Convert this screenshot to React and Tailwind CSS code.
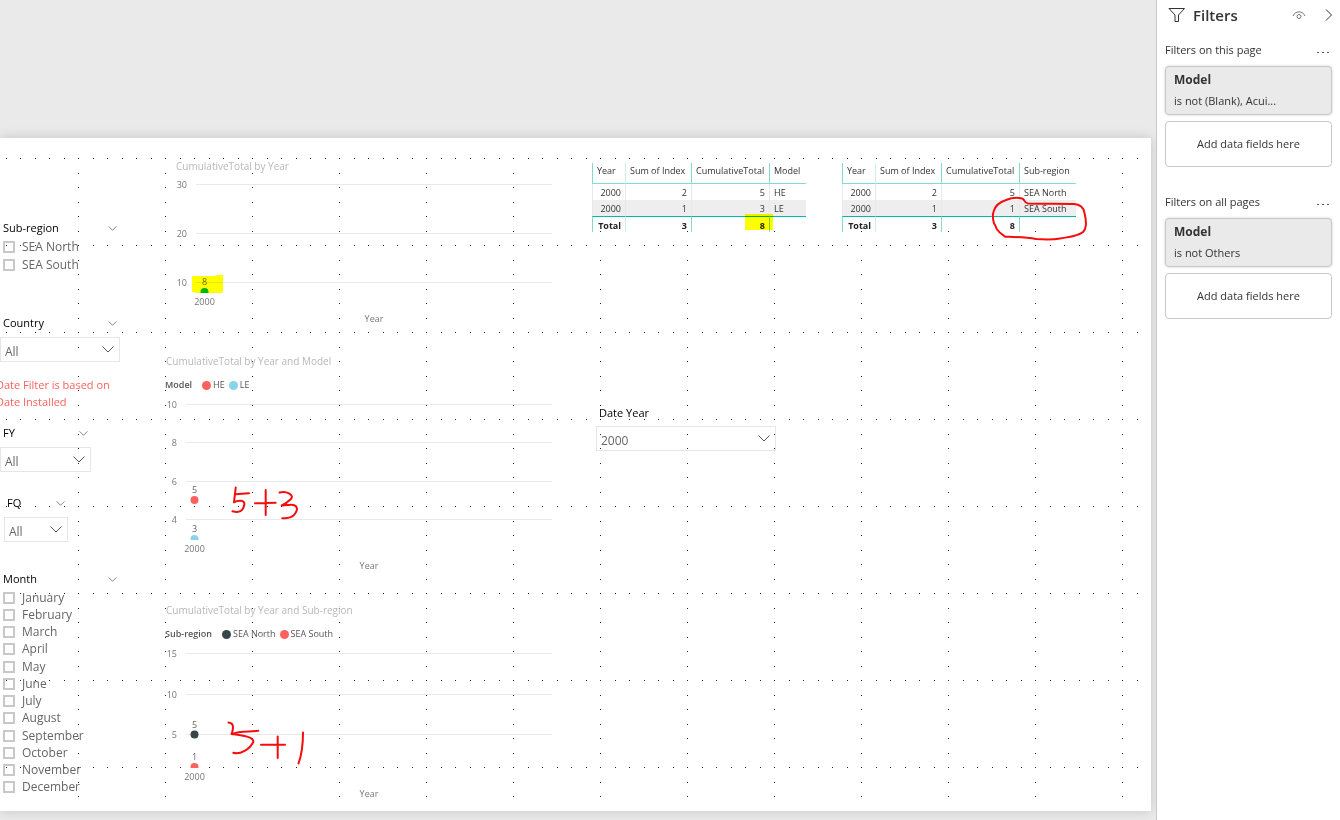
import { useState } from 'react'
import clsx from 'clsx'

const MONTHS = [
  'January', 'February', 'March', 'April', 'May', 'June',
  'July', 'August', 'September', 'October', 'November', 'December',
]

const REGIONS = ['SEA North', 'SEA South']

// dot offsets inside one 87px grid cell
const DOT_STEPS = [0, 15, 29, 44, 58, 73]

function Chevron({ className, size = 9 }) {
  return (
    <svg
      width={size}
      height={size === 9 ? 5 : 7}
      viewBox="0 0 12 7"
      fill="none"
      stroke="currentColor"
      className={className}
      aria-hidden="true"
    >
      <path d="M0.5 0.5 L6 6 L11.5 0.5" />
    </svg>
  )
}

function GridDots() {
  return (
    <svg className="pointer-events-none absolute inset-0 h-full w-full" aria-hidden="true">
      <defs>
        <pattern id="dots" x="78" y="20" width="87" height="87" patternUnits="userSpaceOnUse">
          {DOT_STEPS.map((s) => (
            <rect key={`h${s}`} x={s} y="0" width="1" height="1" fill="#222" />
          ))}
          {DOT_STEPS.slice(1).map((s) => (
            <rect key={`v${s}`} x="0" y={s} width="1" height="1" fill="#222" />
          ))}
        </pattern>
      </defs>
      <rect x="0" y="20" width="1138" height="640" fill="url(#dots)" />
    </svg>
  )
}

function SlicerHeader({ children, className }) {
  return (
    <div className={clsx('flex h-4 items-center justify-between text-[11px] leading-4 text-black', className)}>
      <span>{children}</span>
      <button type="button" aria-label={`${children} options`} className="text-[#555]">
        <Chevron />
      </button>
    </div>
  )
}

function Dropdown({ label, options, className }) {
  const [value, setValue] = useState(options[0])
  return (
    <div className={clsx('relative', className)}>
      <select
        aria-label={label}
        value={value}
        onChange={(e) => setValue(e.target.value)}
        className="h-[25px] w-full appearance-none border border-[#e6e6e6] bg-transparent pl-1 pt-1 text-xs text-[#666] outline-none"
      >
        {options.map((o) => (
          <option key={o}>{o}</option>
        ))}
      </select>
      <Chevron size={12} className="pointer-events-none absolute right-[6px] top-[9px] text-[#555]" />
    </div>
  )
}

function CheckList({ items, className }) {
  return (
    <ul className={clsx('grid auto-rows-fr', className)}>
      {items.map((item) => (
        <li key={item} className="flex items-center">
          <label className="flex items-center gap-[7px] text-xs leading-4 text-[#666]">
            <input type="checkbox" className="h-3 w-3 appearance-none border-2 border-[#c8c8c8] checked:bg-[#666]" />
            {item}
          </label>
        </li>
      ))}
    </ul>
  )
}

function Slicers() {
  return (
    <aside className="w-[165px] shrink-0 pb-[15px] pl-[3px] pt-[82px]">
      <SlicerHeader className="w-[114px]">Sub-region</SlicerHeader>
      <CheckList items={REGIONS} className="mt-[2px] h-9" />

      <SlicerHeader className="mt-[41px] w-[114px]">Country</SlicerHeader>
      <Dropdown label="Country" options={['All']} className="-ml-[3px] mt-[6px] w-[120px]" />

      <p className="-ml-[7px] mt-[14px] w-[130px] text-[11px] leading-[17px] text-[#fd625e]">
        Date Filter is based on
        <br />
        Date Installed
      </p>

      <SlicerHeader className="mt-[15px] w-[85px]">FY</SlicerHeader>
      <Dropdown label="FY" options={['All']} className="-ml-[3px] mt-[6px] w-[91px]" />

      <SlicerHeader className="ml-1 mt-[23px] w-[58px]">FQ</SlicerHeader>
      <Dropdown label="FQ" options={['All']} className="ml-px mt-[6px] w-[64px]" />

      <SlicerHeader className="mt-[29px] w-[114px]">Month</SlicerHeader>
      <CheckList items={MONTHS} className="mt-[2px] h-[207px]" />
    </aside>
  )
}

function Legend({ title, items }) {
  return (
    <div className="mt-[8px] flex h-4 items-center text-[9px] text-[#555]">
      <span className="mr-[10px] font-semibold">{title}</span>
      {items.map((it) => (
        <span key={it.name} className="mr-1 flex items-center gap-[2px]">
          <svg width="9" height="9" aria-hidden="true">
            <circle cx="4.5" cy="4.5" r="4.5" fill={it.color} />
          </svg>
          {it.name}
        </span>
      ))}
    </div>
  )
}

// ticks and points carry pixel positions inside the plot
function Plot({ height, left, labelX, ticks, points, floor, centerX }) {
  const px = left + 8.5
  return (
    <svg width="100%" height={height} className="block text-[9px]" fill="#777">
      {ticks.map((t) => (
        <g key={t.label}>
          <rect x={left} y={t.y} width={387 - left} height="1" fill="#e9e9e9" />
          <text x={labelX} y={t.y + 4} textAnchor="end">{t.label}</text>
        </g>
      ))}
      <svg x="0" y="0" width="100%" height={floor}>
        {points.map((p) => (
          <circle key={p.label} cx={px} cy={p.y} r="4" fill={p.color} />
        ))}
      </svg>
      {points.map((p) => (
        <text key={p.label} x={px} y={p.y - 7} textAnchor="middle" fill="#666">{p.label}</text>
      ))}
      <text x={px} y={floor + 12} textAnchor="middle">2000</text>
      <text x={centerX} y={floor + 29} textAnchor="middle">Year</text>
    </svg>
  )
}

function ChartTitle({ children, className }) {
  return <h3 className={clsx('h-4 text-[10px] leading-4 text-[#b8b8b8]', className)}>{children}</h3>
}

function Charts() {
  return (
    <section className="w-[390px] shrink-0 pt-5">
      <ChartTitle className="pl-[11px]">CumulativeTotal by Year</ChartTitle>
      <Plot
        height={152}
        left={31}
        labelX={22}
        centerX={209}
        floor={119}
        ticks={[{ label: '30', y: 10 }, { label: '20', y: 59 }, { label: '10', y: 108 }]}
        points={[{ label: '8', y: 118, color: '#01b8aa' }]}
      />

      <ChartTitle className="mt-[27px] pl-px">CumulativeTotal by Year and Model</ChartTitle>
      <Legend title="Model" items={[{ name: 'HE', color: '#fd625e' }, { name: 'LE', color: '#8ad4eb' }]} />
      <Plot
        height={180}
        left={21}
        labelX={12}
        centerX={204}
        floor={147}
        ticks={[{ label: '10', y: 11 }, { label: '8', y: 49 }, { label: '6', y: 88 }, { label: '4', y: 126 }]}
        points={[{ label: '5', y: 107, color: '#fd625e' }, { label: '3', y: 146, color: '#8ad4eb' }]}
      />

      <ChartTitle className="mt-[29px] pl-px">CumulativeTotal by Year and Sub-region</ChartTitle>
      <Legend title="Sub-region" items={[{ name: 'SEA North', color: '#374649' }, { name: 'SEA South', color: '#fd625e' }]} />
      <Plot
        height={159}
        left={21}
        labelX={12}
        centerX={204}
        floor={126}
        ticks={[{ label: '15', y: 11 }, { label: '10', y: 52 }, { label: '5', y: 92 }]}
        points={[{ label: '5', y: 92.5, color: '#374649' }, { label: '1', y: 125, color: '#fd625e' }]}
      />
    </section>
  )
}

function DataTable({ lastColumn, rows, lastWidth }) {
  return (
    <table className="table-fixed border-separate border-spacing-0 text-[9px] leading-3 text-[#333]">
      <colgroup>
        <col className="w-[33px]" />
        <col className="w-[66px]" />
        <col className="w-[78px]" />
        <col className={lastWidth} />
      </colgroup>
      <thead>
        <tr className="h-[21px] bg-white text-left">
          <th className="border-b border-l border-[#7fdbd4] px-1 pb-1 font-normal">Year</th>
          <th className="border-b border-l border-b-[#7fdbd4] border-l-[#cdf0ed] px-1 pb-1 font-normal whitespace-nowrap">Sum of Index</th>
          <th className="border-b border-l border-[#7fdbd4] px-1 pb-1 font-normal">CumulativeTotal</th>
          <th className="border-b border-l border-[#7fdbd4] px-1 pb-1 font-normal whitespace-nowrap">{lastColumn}</th>
        </tr>
      </thead>
      <tbody>
        {rows.map((r, i) => (
          <tr key={r[3]} className={clsx('h-4', i % 2 ? 'bg-[#eee]' : 'bg-white')}>
            <td className="border-l border-[#e9e9e9] px-1 pt-[2px] text-right">{r[0]}</td>
            <td className="border-l border-[#e9e9e9] px-1 pt-[2px] text-right">{r[1]}</td>
            <td className="border-l border-[#e9e9e9] px-1 pt-[2px] text-right">{r[2]}</td>
            <td className="border-l border-[#e9e9e9] px-1 pt-[2px] whitespace-nowrap">{r[3]}</td>
          </tr>
        ))}
      </tbody>
      <tfoot>
        <tr className="h-4 font-bold text-[#222]">
          <td className="border-l border-t border-l-[#7fdbd4] border-t-[#01b8aa] px-1 pt-[2px] text-right">Total</td>
          <td className="border-l border-t border-l-[#cdf0ed] border-t-[#01b8aa] px-1 pt-[2px] text-right">3</td>
          <td className="border-l border-t border-l-[#7fdbd4] border-t-[#01b8aa] px-1 pt-[2px] text-right">8</td>
          <td className="border-l border-t border-l-[#7fdbd4] border-t-[#01b8aa] px-1 pt-[2px]" />
        </tr>
      </tfoot>
    </table>
  )
}

function Ink() {
  return (
    <>
      <svg className="pointer-events-none absolute inset-0 h-full w-full mix-blend-multiply" fill="#ffff00" aria-hidden="true">
        <path d="M192 138 L216 138 L216 137 L223 137 L223 154 L221 155 L195 155 L195 154 L192 154 Z" />
        <path d="M745 76 H773 V92 H745 Z" />
      </svg>
      <svg
        className="pointer-events-none absolute inset-0 h-full w-full"
        fill="none"
        stroke="#f60c0c"
        strokeWidth="2"
        strokeLinecap="round"
        strokeLinejoin="round"
        aria-hidden="true"
      >
        {/* 5 + 3 */}
        <path d="M235.7 349.5 L234 364.3 C238 362 245 362 244.3 366.3 C243.3 372.7 240 375.3 232.5 373.3" />
        <path d="M235 356.3 L249 355.3" />
        <path d="M255 365.3 L275.7 364.8 M265.7 352 V377" />
        <path d="M279.5 354.5 C286.7 352.7 295 357 290.7 361.3 C288 364 285 366 281.7 367.5 C290 366.7 297 365 297 371.5 C295 378.7 290 380.3 282.3 380.3" />
        {/* 5 + 1 */}
        <path d="M228.5 584.5 C233.5 585 234 588.5 231.7 596 C245 598 254 599 253.3 604 C250 611 240 617 233.3 614.7" />
        <path d="M231.7 596 C240 592.5 250 594 258.3 592.7" />
        <path d="M261 606.8 H285 M277.7 598.5 V620 M303 594.5 C303 606 302 616 298.5 625.5" />
        {/* loop around the South row */}
        <path d="M994 85.3 C992.5 80 992.5 77 993.5 73.7 C995 67 1000 64 1006 62 C1011 60 1018 59.5 1022 60.5 C1025.5 61.5 1023.5 65 1028 65.5 C1045 66 1061 65.5 1074 66 C1080 66.3 1083.5 69 1084.5 75 C1086 81 1087 90 1083 94 C1078 98.5 1068 99 1060 100.5 C1052 102 1043 101.5 1036 101 C1025 99 1015 99 1005 98.7 C1001 96 998 93 996.7 91 C996 88.5 995.5 87 994 85.3" />
      </svg>
    </>
  )
}

function FilterGroup({ title, condition, className }) {
  return (
    <section className={className}>
      <div className="flex h-4 items-center justify-between text-[11px] text-[#333]">
        <h3>{title}</h3>
        <button type="button" aria-label={`${title} options`} className="mr-[3px] mt-1 text-[#555]">
          <svg width="12" height="2" fill="currentColor" aria-hidden="true">
            <rect x="0" y="1" width="2" height="1" />
            <rect x="5" y="1" width="2" height="1" />
            <rect x="10" y="1" width="2" height="1" />
          </svg>
        </button>
      </div>
      <button
        type="button"
        className="mt-2 flex h-[49px] w-full flex-col rounded-sm border border-[#c8c8c8] bg-[#eaeaea] px-2 pt-[5px] text-left shadow-[0_0_3px_rgba(0,0,0,0.18)]"
      >
        <span className="text-xs leading-4 font-bold text-[#333]">Model</span>
        <span className="mt-[5px] text-[11px] leading-4 text-[#333]">{condition}</span>
      </button>
      <button type="button" className="mt-[6px] h-[46px] w-full rounded-sm border border-[#c8c8c8] bg-white text-[11px] text-[#333]">
        Add data fields here
      </button>
    </section>
  )
}

function FiltersPane() {
  return (
    <aside className="w-[184px] shrink-0 border-l border-[#c8c8c8] bg-white pl-2 pr-2">
      <div className="flex h-[30px] items-center">
        <svg width="18" height="16" viewBox="0 0 18 16" fill="none" stroke="#333" className="ml-[3px]" aria-hidden="true">
          <path d="M1 1.5 H16.5 L10.5 8 V14.5 H7 V8 Z" />
        </svg>
        <h2 className="ml-[7px] text-[15px] font-semibold text-[#333]">Filters</h2>
        <button type="button" aria-label="Show filters" className="ml-auto">
          <svg width="14" height="9" viewBox="0 0 14 9" fill="none" stroke="#777" aria-hidden="true">
            <path d="M1 5 C3 -0.5 11 -0.5 13 5" />
            <circle cx="7" cy="5.5" r="2" />
          </svg>
        </button>
        <button type="button" aria-label="Collapse pane" className="-mr-px ml-[19px]">
          <svg width="8" height="12" viewBox="0 0 8 12" fill="none" stroke="#333" aria-hidden="true">
            <path d="M1 0.5 L6.5 6 L1 11.5" />
          </svg>
        </button>
      </div>
      <FilterGroup title="Filters on this page" condition="is not (Blank), Acui..." className="mt-3" />
      <FilterGroup title="Filters on all pages" condition="is not Others" className="mt-[27px]" />
    </aside>
  )
}

export default function App() {
  return (
    <div className="flex min-h-screen bg-[#eaeaea] font-['Open_Sans','Noto_Sans',sans-serif]">
      <main className="min-w-0 flex-1 overflow-hidden pb-[9px] pr-[5px] pt-[138px]">
        <div className="relative flex bg-white shadow-[0_0_12px_rgba(0,0,0,0.16)]">
          <GridDots />
          <div className="relative flex flex-1">
            <Slicers />
            <Charts />
            <section className="pl-[37px] pt-[25px]">
              <div className="flex gap-9">
                <DataTable
                  lastColumn="Model"
                  lastWidth="w-[37px]"
                  rows={[['2000', '2', '5', 'HE'], ['2000', '1', '3', 'LE']]}
                />
                <DataTable
                  lastColumn="Sub-region"
                  lastWidth="w-[57px]"
                  rows={[['2000', '2', '5', 'SEA North'], ['2000', '1', '1', 'SEA South']]}
                />
              </div>
              <div className="ml-1 mt-[173px] w-[180px]">
                <h3 className="pl-[3px] text-[11px] leading-4 text-black">Date Year</h3>
                <Dropdown label="Date Year" options={['2000']} className="mt-[5px]" />
              </div>
            </section>
          </div>
          <Ink />
        </div>
      </main>
      <FiltersPane />
    </div>
  )
}
